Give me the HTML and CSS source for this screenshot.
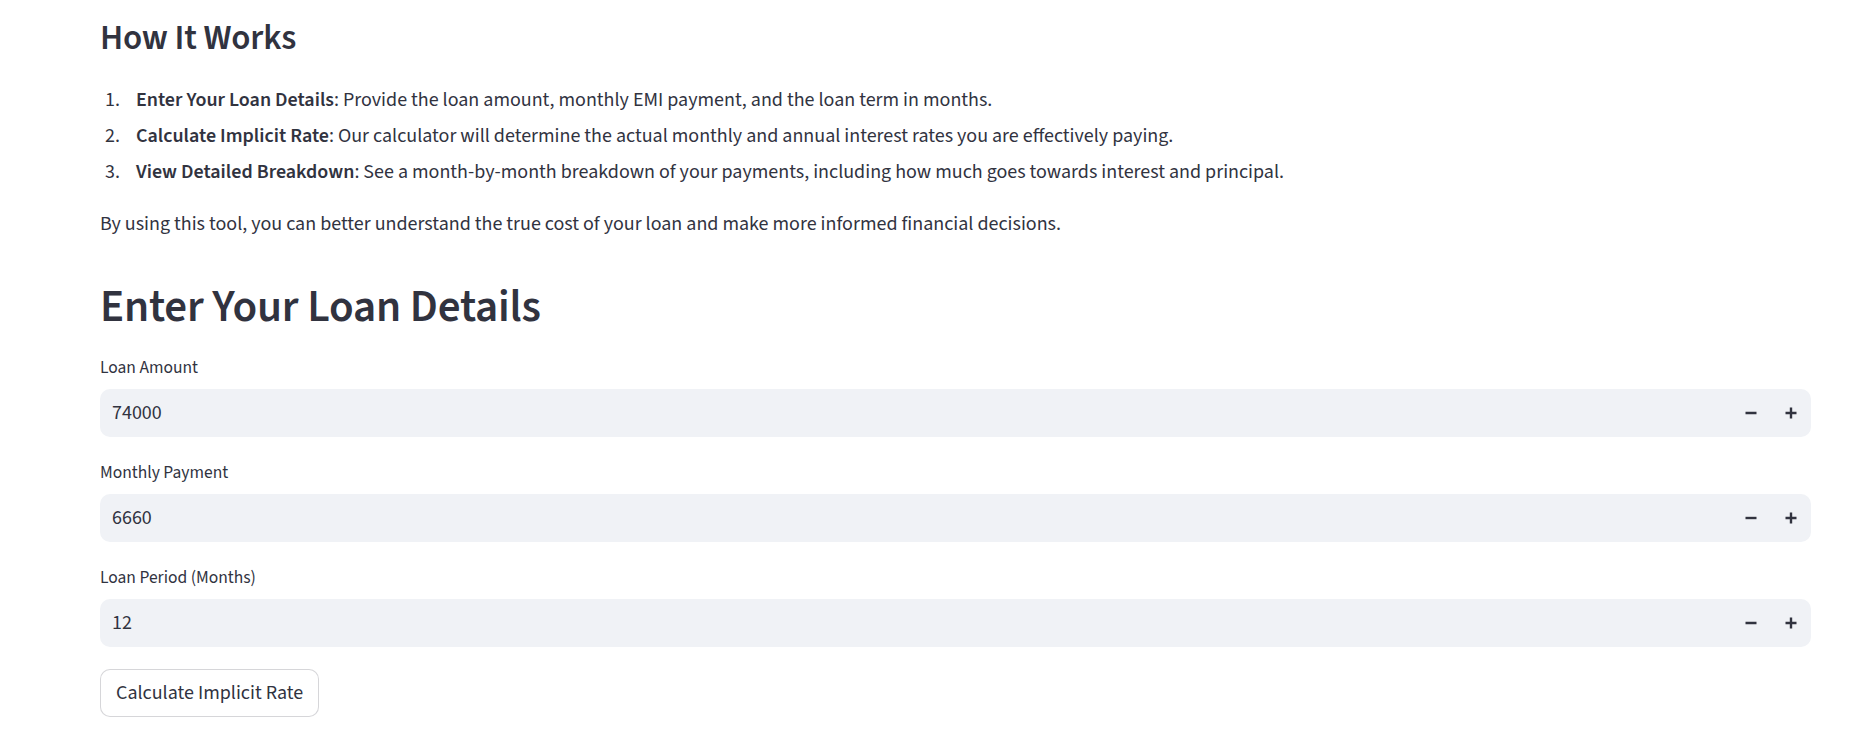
FILE: index.html
```html
<!DOCTYPE html>
<html lang="en">
<head>
<meta charset="utf-8">
<title>Implicit Loan Rate Calculator</title>
<link rel="stylesheet" href="styles.css">
</head>
<body>
<main class="main">
  <section class="how">
    <h3 class="h3">How It Works</h3>
    <ol class="steps">
      <li><strong>Enter Your Loan Details</strong>: Provide the loan amount, monthly EMI payment, and the loan term in months.</li>
      <li><strong>Calculate Implicit Rate</strong>: Our calculator will determine the actual monthly and annual interest rates you are effectively paying.</li>
      <li><strong>View Detailed Breakdown</strong>: See a month-by-month breakdown of your payments, including how much goes towards interest and principal.</li>
    </ol>
    <p class="para">By using this tool, you can better understand the true cost of your loan and make more informed financial decisions.</p>
  </section>

  <h2 class="h2">Enter Your Loan Details</h2>

  <div class="form">
    <div class="field">
      <label class="label" for="amount">Loan Amount</label>
      <div class="num">
        <input class="num-input" id="amount" type="text" value="74000">
        <button class="step" type="button" aria-label="Decrement">
          <svg width="12" height="12" viewBox="0 0 12 12"><path d="M0.5 6H11.5" stroke="#31333F" stroke-width="2.4"/></svg>
        </button>
        <button class="step" type="button" aria-label="Increment">
          <svg width="12" height="12" viewBox="0 0 12 12"><path d="M0.5 6H11.5M6 0.5V11.5" stroke="#31333F" stroke-width="2.4"/></svg>
        </button>
      </div>
    </div>

    <div class="field">
      <label class="label" for="payment">Monthly Payment</label>
      <div class="num">
        <input class="num-input" id="payment" type="text" value="6660">
        <button class="step" type="button" aria-label="Decrement">
          <svg width="12" height="12" viewBox="0 0 12 12"><path d="M0.5 6H11.5" stroke="#31333F" stroke-width="2.4"/></svg>
        </button>
        <button class="step" type="button" aria-label="Increment">
          <svg width="12" height="12" viewBox="0 0 12 12"><path d="M0.5 6H11.5M6 0.5V11.5" stroke="#31333F" stroke-width="2.4"/></svg>
        </button>
      </div>
    </div>

    <div class="field">
      <label class="label" for="period">Loan Period (Months)</label>
      <div class="num">
        <input class="num-input" id="period" type="text" value="12">
        <button class="step" type="button" aria-label="Decrement">
          <svg width="12" height="12" viewBox="0 0 12 12"><path d="M0.5 6H11.5" stroke="#31333F" stroke-width="2.4"/></svg>
        </button>
        <button class="step" type="button" aria-label="Increment">
          <svg width="12" height="12" viewBox="0 0 12 12"><path d="M0.5 6H11.5M6 0.5V11.5" stroke="#31333F" stroke-width="2.4"/></svg>
        </button>
      </div>
    </div>

    <div class="actions">
      <button class="btn" type="button">Calculate Implicit Rate</button>
    </div>
  </div>
</main>
</body>
</html>
```
FILE: styles.css
```css
* { box-sizing: border-box; }

html, body {
  margin: 0;
  background: #ffffff;
}

body {
  font-family: "Source Sans 3", "Source Sans Pro", "Noto Sans", sans-serif;
  color: #31333F;
  font-size: 20px;
  line-height: 1.6;
}

.main {
  padding: 17px 49px 0 100px;
}

.h3 {
  margin: 0;
  font-size: 35px;
  line-height: 42px;
  font-weight: 600;
  letter-spacing: -0.2px;
  padding-bottom: 25px;
}

.steps {
  margin: 0 0 20px;
  padding-left: 24px;
}

.steps li {
  padding-left: 12px;
  line-height: 32px;
}

.steps li + li {
  margin-top: 4px;
}

.steps strong {
  font-weight: 600;
}

.para {
  margin: 0;
  line-height: 32px;
}

.h2 {
  margin: 40px 0 18px;
  font-size: 45px;
  line-height: 54px;
  font-weight: 600;
  letter-spacing: -0.2px;
}

.form {
  display: flex;
  flex-direction: column;
  gap: 20px;
}

.field {
  display: flex;
  flex-direction: column;
}

.label {
  display: flex;
  align-items: center;
  height: 32px;
  margin-bottom: 5px;
  font-size: 17.5px;
  line-height: 1.6;
}

.num {
  display: flex;
  align-items: stretch;
  height: 48px;
  background: #F0F2F6;
  border-radius: 10px;
  overflow: hidden;
}

.num-input {
  flex: 1;
  min-width: 0;
  border: none;
  outline: none;
  background: transparent;
  font: inherit;
  font-size: 20px;
  color: #31333F;
  padding: 0 12px;
}

.step {
  width: 40px;
  border: none;
  background: transparent;
  padding: 0;
  display: flex;
  align-items: center;
  justify-content: center;
  cursor: pointer;
}

.step svg {
  display: block;
}

.actions {
  display: flex;
  padding-top: 2px;
}

.btn {
  font: inherit;
  font-size: 20px;
  line-height: 32px;
  color: #31333F;
  background: #ffffff;
  border: 1px solid rgba(49, 51, 63, 0.2);
  border-radius: 10px;
  padding: 5px 15px;
  min-height: 48px;
  cursor: pointer;
}
```
